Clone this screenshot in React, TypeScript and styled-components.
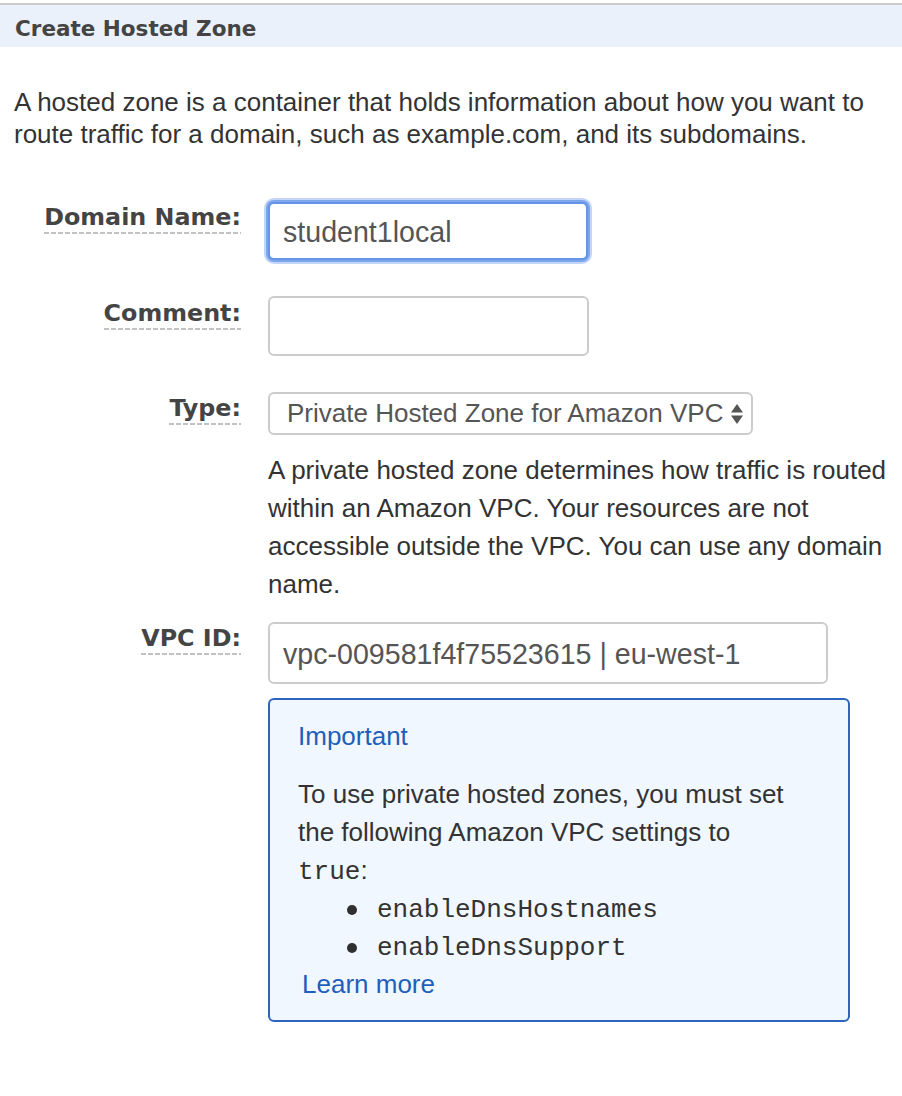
import React from "react";
import styled, { createGlobalStyle } from "styled-components";

const GlobalStyle = createGlobalStyle`
  html, body { margin: 0; padding: 0; background: #ffffff; }
  body { font-family: "Liberation Sans", Arial, sans-serif; color: #333333; }
  * { box-sizing: border-box; }
`;

const Page = styled.div`
  width: 902px;
  padding-top: 3px;
`;

const Header = styled.div`
  height: 44px;
  border-top: 2px solid #cbcbcb;
  background: #eaf1fb;
  display: flex;
  align-items: center;
  padding: 5px 15px 0;
`;

const Title = styled.h1`
  margin: 0;
  font-family: "DejaVu Sans", Verdana, sans-serif;
  font-weight: bold;
  font-size: 21.5px;
  color: #444444;
`;

const Intro = styled.p`
  margin: 39px 0 0;
  padding: 0 14px;
  font-size: 26px;
  line-height: 32px;
  color: #333333;
`;

const Form = styled.div`
  margin-top: 52px;
  display: flex;
  flex-direction: column;
`;

const Row = styled.div<{ $after: number }>`
  display: flex;
  align-items: flex-start;
  gap: 27px;
  margin-bottom: ${(p) => p.$after}px;
`;

const LabelCell = styled.div<{ $offset: number }>`
  width: 241px;
  flex: none;
  display: flex;
  justify-content: flex-end;
  padding-top: ${(p) => p.$offset}px;
`;

const Label = styled.label`
  font-family: "DejaVu Sans", Verdana, sans-serif;
  font-weight: bold;
  font-size: 23.8px;
  line-height: 30px;
  color: #444444;
  padding-bottom: 2px;
  background-image: repeating-linear-gradient(
    to right,
    #c2c2c2 0 5px,
    transparent 5px 7px
  );
  background-size: 100% 2px;
  background-position: left bottom;
  background-repeat: no-repeat;
`;

const Field = styled.div`
  width: 622px;
  display: flex;
  flex-direction: column;
`;

const TextInput = styled.div<{ $w: number; $h: number; $focus?: boolean }>`
  width: ${(p) => p.$w}px;
  height: ${(p) => p.$h}px;
  border: 2px solid ${(p) => (p.$focus ? "#6494e6" : "#cccccc")};
  border-radius: 6px;
  background: #ffffff;
  display: flex;
  align-items: center;
  padding: 2px 13px 0;
  font-size: 28.6px;
  color: #555555;
  box-shadow: ${(p) =>
    p.$focus ? "0 0 0 2px #7ea6ee, 0 0 0 4px #c3d6f7" : "none"};
`;

const Select = styled.div`
  width: 485px;
  height: 43px;
  border: 2px solid #cccccc;
  border-radius: 6px;
  background: #ffffff;
  display: flex;
  align-items: center;
  justify-content: space-between;
  padding: 0 7px 0 17px;
  font-size: 26px;
  color: #555555;
`;

const Help = styled.p`
  margin: 16px 0 0;
  font-size: 26px;
  line-height: 38px;
  color: #333333;
`;

const Notice = styled.div`
  margin-top: 14px;
  width: 582px;
  border: 2px solid #2c65b9;
  border-radius: 6px;
  background: #f0f7fe;
  padding: 17px 50px 19px 28px;
  font-size: 26px;
  line-height: 38px;
  color: #333333;
`;

const NoticeTitle = styled.div`
  color: #1f5fbb;
  margin-bottom: 20px;
`;

const NoticeText = styled.div``;

const Code = styled.code`
  font-family: "Liberation Mono", "Courier New", monospace;
  font-size: 26px;
  color: #333333;
`;

const List = styled.ul`
  margin: 0;
  padding: 0;
  list-style: none;
`;

const Item = styled.li`
  display: flex;
  align-items: center;
  &::before {
    content: "";
    width: 10px;
    height: 10px;
    border-radius: 50%;
    background: #2f2f2f;
    margin: 0 20px 0 49px;
    flex: none;
  }
`;

const LearnMore = styled.a`
  display: block;
  width: fit-content;
  line-height: 34px;
  padding-left: 4px;
  color: #1f5fbb;
  text-decoration: none;
`;

const Arrows = () => (
  <svg width="14" height="22" viewBox="0 0 14 22" aria-hidden="true">
    <path d="M7 1 L13 9.5 H1 Z" fill="#555555" />
    <path d="M7 21 L13 12.5 H1 Z" fill="#555555" />
  </svg>
);

export default function App() {
  return (
    <Page>
      <GlobalStyle />
      <Header>
        <Title>Create Hosted Zone</Title>
      </Header>
      <Intro>
        A hosted zone is a container that holds information about how you want
        to route traffic for a domain, such as example.com, and its subdomains.
      </Intro>
      <Form>
        <Row $after={36}>
          <LabelCell $offset={0}>
            <Label>Domain Name:</Label>
          </LabelCell>
          <Field>
            <TextInput $w={320} $h={58} $focus>
              student1local
            </TextInput>
          </Field>
        </Row>
        <Row $after={36}>
          <LabelCell $offset={2}>
            <Label>Comment:</Label>
          </LabelCell>
          <Field>
            <TextInput $w={321} $h={60} />
          </Field>
        </Row>
        <Row $after={19}>
          <LabelCell $offset={1}>
            <Label>Type:</Label>
          </LabelCell>
          <Field>
            <Select>
              <span>Private Hosted Zone for Amazon VPC</span>
              <Arrows />
            </Select>
            <Help>
              A private hosted zone determines how traffic is routed within an
              Amazon VPC. Your resources are not accessible outside the VPC.
              You can use any domain name.
            </Help>
          </Field>
        </Row>
        <Row $after={0}>
          <LabelCell $offset={1}>
            <Label>VPC ID:</Label>
          </LabelCell>
          <Field>
            <TextInput $w={560} $h={62}>
              vpc-009581f4f75523615 | eu-west-1
            </TextInput>
            <Notice>
              <NoticeTitle>Important</NoticeTitle>
              <NoticeText>
                To use private hosted zones, you must set the following Amazon
                VPC settings to <Code>true</Code>:
              </NoticeText>
              <List>
                <Item>
                  <Code>enableDnsHostnames</Code>
                </Item>
                <Item>
                  <Code>enableDnsSupport</Code>
                </Item>
              </List>
              <LearnMore href="#">Learn more</LearnMore>
            </Notice>
          </Field>
        </Row>
      </Form>
    </Page>
  );
}
